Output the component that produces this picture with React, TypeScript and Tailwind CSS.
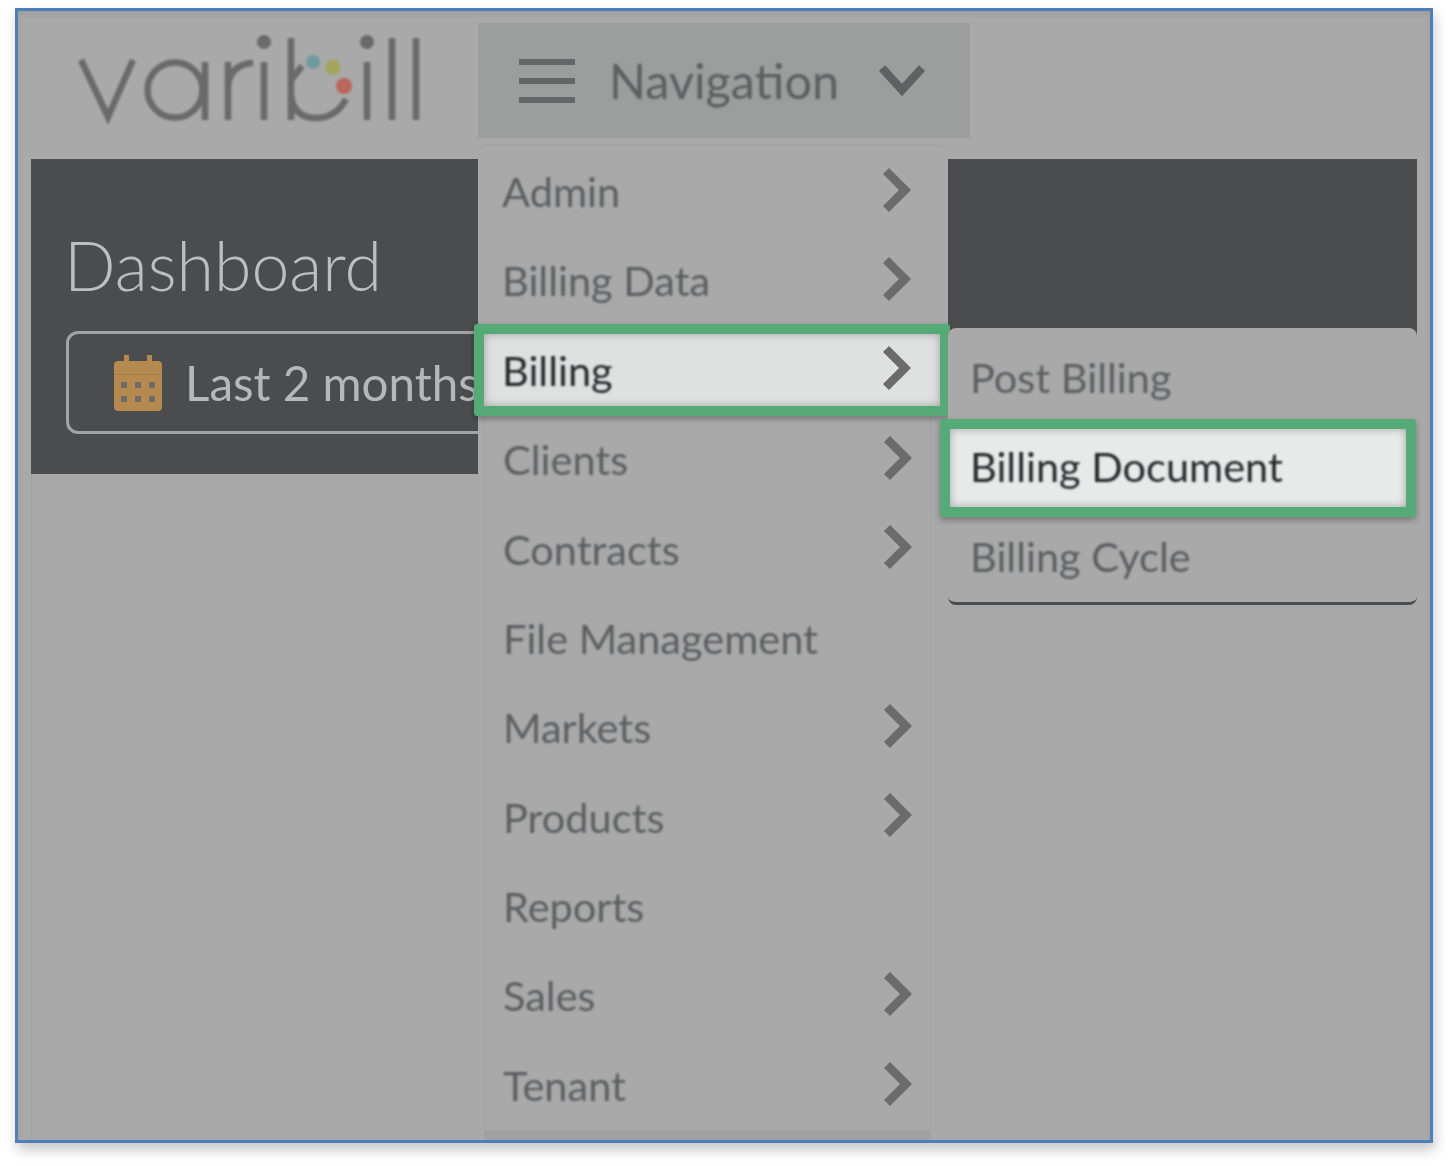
const font = { fontFamily: '"Lato", "Open Sans", sans-serif' };

function ChevronRight() {
  return (
    <svg width="32" height="48" viewBox="0 0 32 48" className="-mt-[4px] shrink-0 blur-[0.5px]" aria-hidden="true">
      <polyline points="5,5 24,24 5,43" fill="none" stroke="#6b6b6b" strokeWidth="8.5" />
    </svg>
  );
}

function Row({ label, chevron, dark }: { label: string; chevron?: boolean; dark?: boolean }) {
  return (
    <div className="relative flex h-[89.4px] items-center justify-between pl-[24px] pr-[35px]">
      <span className={`relative text-[41.5px] leading-none blur-[0.8px] ${dark ? 'text-[#26292c]' : 'text-[#5c5e61]'}`}>
        {label}
      </span>
      {chevron && (
        <span className="relative">
          <ChevronRight />
        </span>
      )}
    </div>
  );
}

function Logo() {
  return (
    <svg width="350" height="92" viewBox="78 34 350 92" role="img" aria-label="varibill" className="blur-[1px]">
      <g fill="none" stroke="#6a6a6a" strokeWidth="6.5">
        <polyline points="81,60 108,117 133,60" />
        <circle cx="175" cy="90" r="27.5" />
        <line x1="205" y1="62" x2="205" y2="120" />
        <line x1="228" y1="62" x2="228" y2="120" />
        <path d="M228 84 Q232 64 253 63" />
        <line x1="264" y1="62" x2="264" y2="120" />
        <line x1="291" y1="38" x2="291" y2="120" />
        <path d="M291 96 Q294 118 316 118 Q336 118 346 99" />
        <line x1="291" y1="80" x2="302" y2="66" />
        <line x1="367" y1="62" x2="367" y2="120" />
        <line x1="392" y1="38" x2="392" y2="120" />
        <line x1="416" y1="38" x2="416" y2="120" />
      </g>
      <circle cx="264" cy="42" r="7" fill="#6a6a6a" />
      <circle cx="367" cy="42" r="7" fill="#6a6a6a" />
      <circle cx="313" cy="62" r="7" fill="#6f9a9e" />
      <circle cx="333" cy="67" r="7.5" fill="#a3a558" />
      <circle cx="344" cy="86" r="8" fill="#bb665a" />
    </svg>
  );
}

function Calendar() {
  return (
    <svg width="48" height="56" viewBox="0 0 48 56" className="blur-[0.5px]" aria-hidden="true">
      <path
        fill="#b58a50"
        d="M10 0h5v6h18V0h5v6h6a4 4 0 0 1 4 4v42a4 4 0 0 1-4 4H4a4 4 0 0 1-4-4V10a4 4 0 0 1 4-4h6z"
      />
      <rect x="0" y="19" width="48" height="1" fill="#a37c48" />
      <g fill="#6f6b66">
        <rect x="7" y="27" width="6" height="6" />
        <rect x="21" y="27" width="6" height="6" />
        <rect x="35" y="27" width="6" height="6" />
        <rect x="7" y="41" width="6" height="6" />
        <rect x="21" y="41" width="6" height="6" />
        <rect x="35" y="41" width="6" height="6" />
      </g>
    </svg>
  );
}

export default function App() {
  const lower = [
    { label: 'Clients', chevron: true },
    { label: 'Contracts', chevron: true },
    { label: 'File Management' },
    { label: 'Markets', chevron: true },
    { label: 'Products', chevron: true },
    { label: 'Reports' },
    { label: 'Sales', chevron: true },
    { label: 'Tenant', chevron: true },
  ];

  return (
    <div className="h-[1166px] w-[1449px] overflow-hidden bg-white pl-[15px] pt-[8px]" style={font}>
      <div className="relative flex h-[1135px] w-[1418px] flex-col overflow-hidden border-[3px] border-[#4f7eb8] bg-[#a9a9a9] shadow-[inset_0_4px_5px_rgba(0,0,0,0.06),2px_7px_12px_rgba(0,0,0,0.22)]">
        {/* Header */}
        <header className="flex h-[148px] shrink-0 pl-[60px] pt-[12px]">
          <div className="w-[400px] pt-[11px]">
            <Logo />
          </div>
          <button className="flex h-[115px] w-[492px] items-center bg-[#9c9e9d] pl-[41px]">
            <span className="flex h-[44px] w-[56px] flex-col justify-between blur-[0.5px]">
              <span className="h-[6px] bg-[#636567]" />
              <span className="h-[6px] bg-[#636567]" />
              <span className="h-[6px] bg-[#636567]" />
            </span>
            <span className="ml-[34px] text-[48.5px] leading-none text-[#5c5e60] blur-[0.8px]">Navigation</span>
            <svg width="46" height="32" viewBox="0 0 46 32" className="ml-[40px] blur-[0.5px]" aria-hidden="true">
              <polyline points="3,3 23,25 43,3" fill="none" stroke="#5f6163" strokeWidth="8.5" />
            </svg>
          </button>
        </header>

        {/* Dark title panel */}
        <section className="mx-[13px] flex h-[315px] shrink-0 flex-col items-start overflow-hidden bg-[#4b4c4e] pl-[35px] pt-[70px]">
          <h1 className="-ml-[2px] text-[68px] font-light leading-[72px] text-[#bcbfc2] blur-[0.6px]">Dashboard</h1>
          <div className="mt-[30px] flex h-[103px] w-[520px] shrink-0 items-center rounded-[12px] border-[3px] border-[#a3a3a3] pl-[45px]">
            <Calendar />
            <span className="ml-[23px] text-[47.5px] leading-none text-[#b5b8bb] blur-[0.7px]">Last 2 months</span>
          </div>
        </section>

        {/* Main (empty) content */}
        <main className="mx-[13px] flex-1 border-l border-[#a2a0a2] bg-[#a8a8a8]" />

        {/* Navigation menu */}
        <nav className="absolute bottom-0 left-[460px] top-[134px] w-[470px] rounded-t-[8px] border-t border-[#a1a1a1] bg-[#a9a9a9] pt-[1px]">
          <Row label="Admin" chevron />
          <Row label="Billing Data" chevron />
          <div className="relative">
            <div className="absolute left-[-4px] top-[-2px] h-[92px] w-[476px] rounded-[3px] border-[10px] border-[#56aa78] bg-[#dfe1e0] shadow-[inset_0_0_8px_rgba(0,0,0,0.3),0_3px_6px_rgba(0,0,0,0.3)]" />
            <Row label="Billing" chevron dark />
          </div>
          <div className="ml-[6px] flex h-[760px] w-[447px] flex-col border-x border-[#a2a2a2]">
            <div className="-ml-[6px] w-[470px]">
              {lower.map((item) => (
                <Row key={item.label} label={item.label} chevron={item.chevron} />
              ))}
            </div>
            <div className="-mx-px h-[12px] bg-[#a1a1a1]" />
          </div>
        </nav>

        {/* Submenu */}
        <div className="absolute left-[930px] top-[317px] h-[277px] w-[469px] rounded-[8px] border-b-[3px] border-[#4b4c4e] bg-[#a9a9a9] pt-[5px]">
          <div className="-ml-[2px]">
            <Row label="Post Billing" />
            <div className="relative">
              <div className="absolute left-[-6px] top-[-3px] h-[98px] w-[476px] rounded-[3px] border-[10px] border-[#56aa78] bg-[#e8e9e9] shadow-[inset_0_0_8px_rgba(0,0,0,0.3),0_3px_6px_rgba(0,0,0,0.3)]" />
              <Row label="Billing Document" dark />
            </div>
            <Row label="Billing Cycle" />
          </div>
        </div>
      </div>
    </div>
  );
}
